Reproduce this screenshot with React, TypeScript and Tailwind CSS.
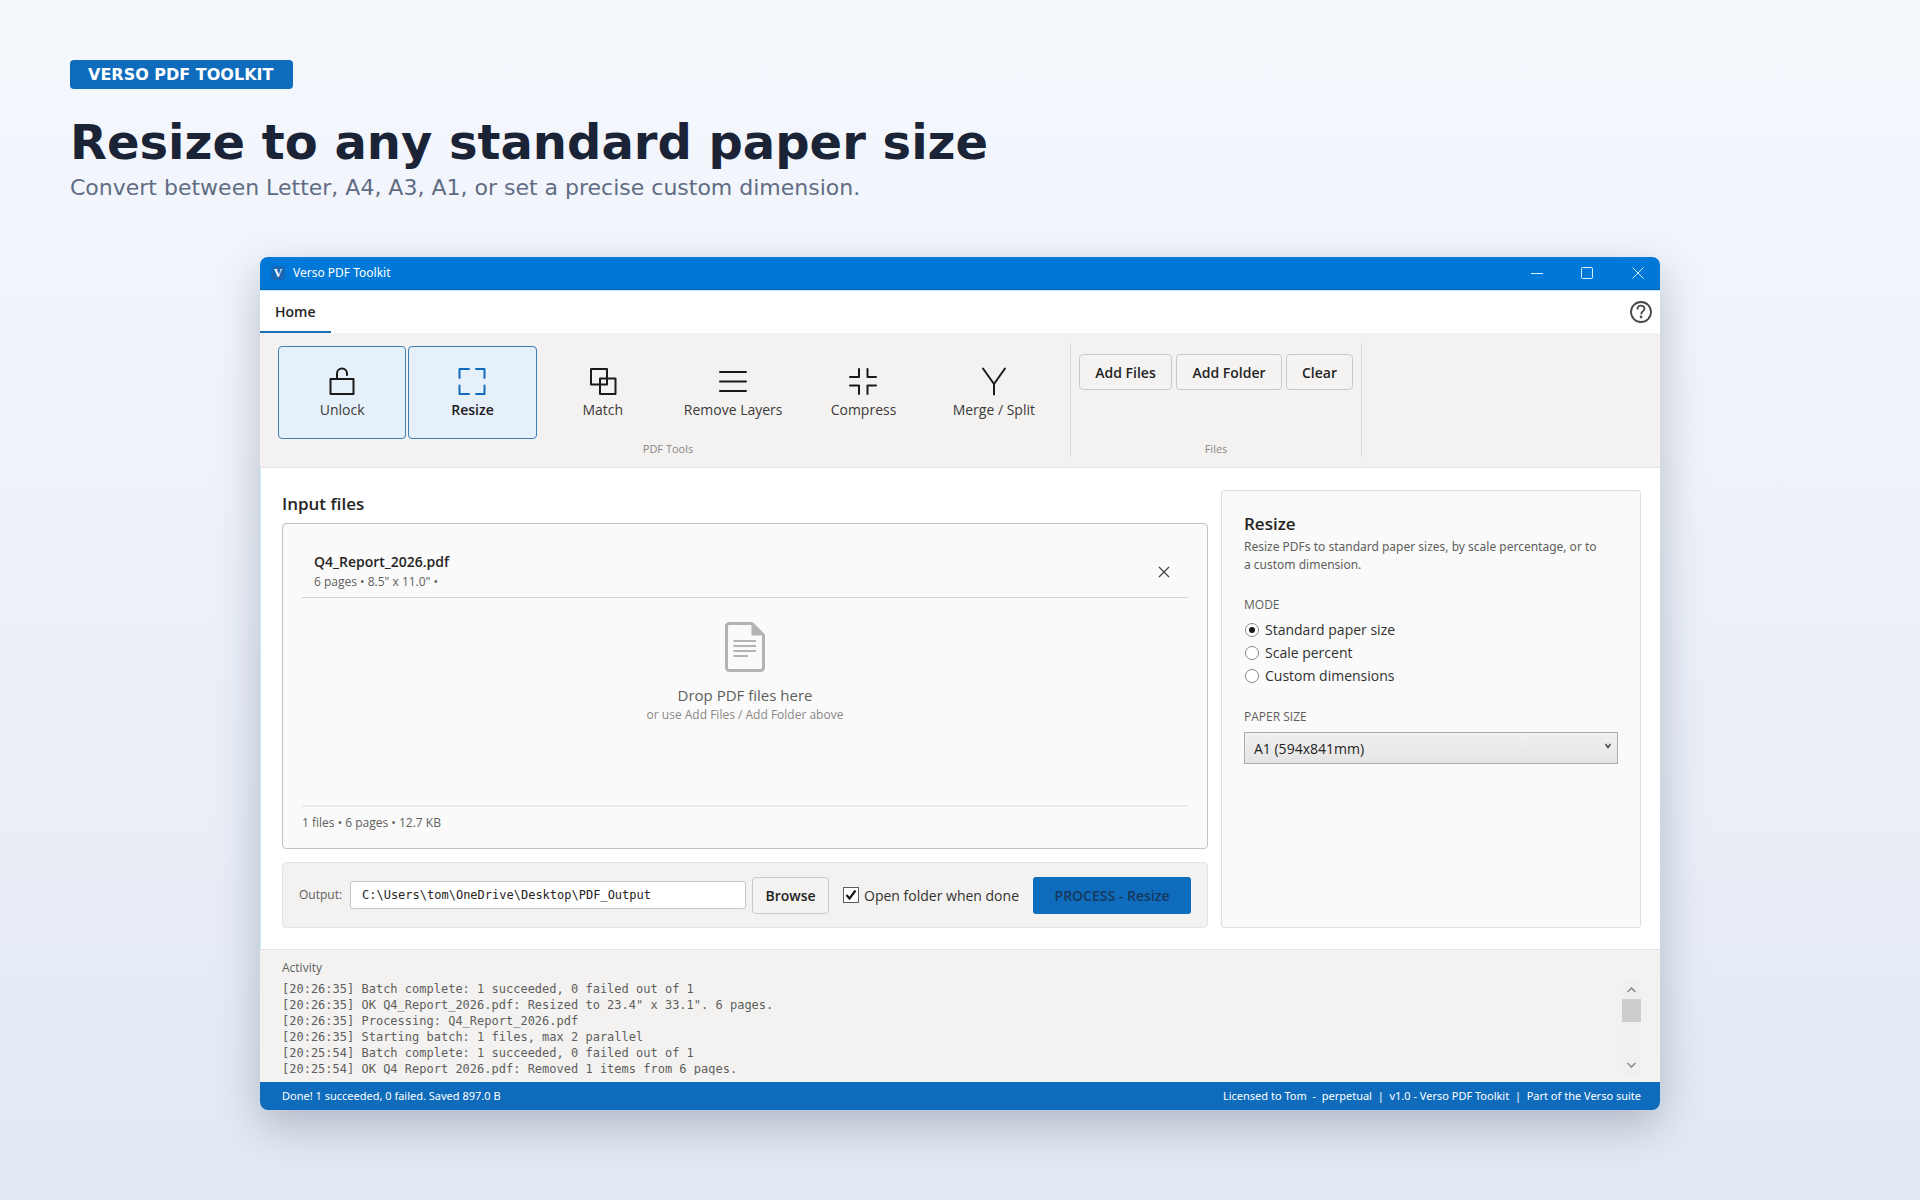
import React, { useState } from "react";

type Tool = {
  name: string;
  icon: React.ReactNode;
};

const tools: Tool[] = [
  {
    name: "Unlock",
    icon: (
      <>
        <rect x="2.5" y="12" width="23" height="15" />
        <path d="M9 12V6.5a5 5 0 0 1 10 0V8" />
      </>
    ),
  },
  {
    name: "Resize",
    icon: <path d="M1.5 11V2H11M18 2h8.500v9M1.500 18.500V27H11M18 27h8.500v-8.500" />,
  },
  {
    name: "Match",
    icon: (
      <>
        <rect x="2" y="2" width="16" height="15.500" />
        <rect x="11" y="11.500" width="15.500" height="15.500" />
      </>
    ),
  },
  {
    name: "Remove Layers",
    icon: <path d="M1 5h26M1 14.500h26M1 24h26" />,
  },
  {
    name: "Compress",
    icon: <path d="M10 2v8H1M18.500 2v8H27M10 27v-8.500H1M18.500 27v-8.500H27" />,
  },
  {
    name: "Merge / Split",
    icon: <path d="M3 1.500L14 17L25 1.500M14 17v10.500" />,
  },
];

const modes = ["Standard paper size", "Scale percent", "Custom dimensions"];

const paperSizes = [
  "A1 (594x841mm)",
  "A3 (297x420mm)",
  "A4 (210x297mm)",
  "Letter (8.5x11in)",
];

const activity = [
  "[20:26:35] Batch complete: 1 succeeded, 0 failed out of 1",
  '[20:26:35] OK Q4_Report_2026.pdf: Resized to 23.4" x 33.1". 6 pages.',
  "[20:26:35] Processing: Q4_Report_2026.pdf",
  "[20:26:35] Starting batch: 1 files, max 2 parallel",
  "[20:25:54] Batch complete: 1 succeeded, 0 failed out of 1",
  "[20:25:54] OK Q4_Report_2026.pdf: Removed 1 items from 6 pages.",
];

const TitleBar = () => (
  <div className="flex h-[33px] items-center justify-between border-b border-[#0a5fad] bg-[#0078d7] pl-[11px] text-white">
    <div className="flex items-center gap-2">
      <span className="flex size-[14px] items-center justify-center rounded-sm bg-[#1767b5] font-['Liberation_Serif',serif] text-xs font-bold">
        V
      </span>
      <span className="font-['Noto_Sans',sans-serif] text-[12px]">Verso PDF Toolkit</span>
    </div>
    <div className="flex h-full">
      <button aria-label="Minimize" className="flex w-[50px] items-center justify-center">
        <svg width="12" height="12" fill="none" stroke="#d8f2ff">
          <path d="M0 6.500h12" />
        </svg>
      </button>
      <button aria-label="Maximize" className="flex w-[50px] items-center justify-center">
        <svg width="12" height="12" fill="none" stroke="#d8f2ff">
          <rect x="0.500" y="0.500" width="11" height="11" rx="1" />
        </svg>
      </button>
      <button aria-label="Close" className="flex w-12 items-center justify-center pl-1">
        <svg width="12" height="12" fill="none" stroke="#d8f2ff">
          <path d="M0.500 0.500l11 11M11.500 0.500l-11 11" />
        </svg>
      </button>
    </div>
  </div>
);

const TabBar = () => (
  <div className="flex h-[43px] items-stretch justify-between border-t border-[#c4ecfa] bg-white pr-2">
    <button className="border-b-2 border-[#1a6fb9] px-[15px] text-[14px] font-semibold text-[#252423]">
      Home
    </button>
    <button aria-label="Help" className="text-[#484644]">
      <svg width="22" height="22" viewBox="0 0 22 22" fill="none" stroke="currentColor" strokeWidth="1.800">
        <circle cx="11" cy="11" r="10" />
        <path d="M7.500 8.500V7.800a3.500 3.200 0 0 1 7 0c0 2.200-3.300 2.600-3.300 5.400" />
        <circle cx="11.100" cy="16" r="0.500" />
      </svg>
    </button>
  </div>
);

const Ribbon = () => {
  const [active, setActive] = useState("Resize");
  const plain =
    "h-9 rounded-[4px] border border-[#cccac8] bg-[#f4f3f2] text-[14px] font-semibold text-[#252423]";
  return (
    <div className="flex h-[135px] border-b border-[#e3e1df] bg-[#f3f2f1] py-[10px] pl-[18px]">
      <div className="flex flex-col items-center border-r border-[#dddbd9] pr-3">
        <div className="grid w-[780px] grid-cols-6 gap-[2px] pt-[3px]">
          {tools.map((tool) => {
            const lit = tool.name === active || tool.name === "Unlock";
            return (
              <button
                key={tool.name}
                onClick={() => setActive(tool.name)}
                className={
                  lit
                    ? "flex h-[93px] flex-col items-center gap-[2px] rounded-[4px] border border-[#3f7fb8] bg-[#e5f0fb] pt-5 text-[#1b1a19]"
                    : "flex h-[93px] flex-col items-center gap-[2px] rounded-[4px] border border-transparent pt-5 text-[#1b1a19]"
                }
              >
                <svg
                  width="28"
                  height="29"
                  viewBox="0 0 28 29"
                  fill="none"
                  stroke={tool.name === active ? "#0f6cbd" : "currentColor"}
                  strokeWidth="2"
                  strokeLinejoin="round"
                  strokeLinecap="round"
                >
                  {tool.icon}
                </svg>
                <span
                  className={
                    tool.name === active
                      ? "text-[14px] leading-6 font-semibold"
                      : "text-[14px] leading-6 text-[#3b3a39]"
                  }
                >
                  {tool.name}
                </span>
              </button>
            );
          })}
        </div>
        <span className="text-[11px] leading-5 text-[#8a8886]">PDF Tools</span>
      </div>
      <div className="flex flex-col items-center border-r border-[#dddbd9] px-2 pt-[11px]">
        <div className="flex gap-1">
          <button className={plain + " w-[93px]"}>Add Files</button>
          <button className={plain + " w-[106px]"}>Add Folder</button>
          <button className={plain + " w-[67px]"}>Clear</button>
        </div>
        <span className="pt-[49px] text-[11px] leading-5 text-[#8a8886]">Files</span>
      </div>
    </div>
  );
};

const DropPanel = () => (
  <div className="flex h-[326px] flex-col rounded-[4px] border border-[#c4c2c0] bg-[#fafafa] px-[19px] pt-4">
    <div className="flex h-[58px] items-center justify-between border-b border-[#d6d4d2] pt-[6px] pr-[18px] pl-3">
      <div>
        <p className="text-[14px] leading-5 font-semibold text-[#252423]">Q4_Report_2026.pdf</p>
        <p className="text-[12px] leading-5 text-[#605e5c]">6 pages • 8.5" x 11.0" •</p>
      </div>
      <button aria-label="Remove file" className="text-[#484644]">
        <svg width="12" height="12" fill="none" stroke="currentColor" strokeWidth="1.300">
          <path d="M1 1l10 10M11 1l-10 10" />
        </svg>
      </button>
    </div>
    <div className="flex grow flex-col items-center pt-6">
      <svg width="40" height="50" viewBox="0 0 40 50" fill="none" stroke="#b3b3b3" strokeLinejoin="round">
        <path d="M4 1.500H27L38.500 13V45a3 3 0 0 1-3 3.500H4.500a3 3 0 0 1-3-3V4.500a3 3 0 0 1 2.500-3z" strokeWidth="3" />
        <path d="M27 1.500V13H38.500z" fill="#b3b3b3" />
        <path d="M8.500 19H31M8.500 24H31M8.500 29H31M8.500 34H23" strokeWidth="2" />
      </svg>
      <p className="pt-[11px] text-[15px] leading-6 text-[#605e5c]">Drop PDF files here</p>
      <p className="text-[12px] leading-4 text-[#8a8886]">or use Add Files / Add Folder above</p>
    </div>
    <div className="h-[43px] border-t-2 border-[#ebebea] pt-[6px] text-[12px] leading-5 text-[#605e5c]">
      1 files • 6 pages • 12.7 KB
    </div>
  </div>
);

const OutputBar = () => (
  <div className="flex h-[66px] items-center rounded-[4px] border border-[#e5e3e1] bg-[#f3f2f1] px-4">
    <label htmlFor="output" className="w-[51px] text-[12px] font-medium text-[#605e5c]">
      Output:
    </label>
    <input
      id="output"
      defaultValue="C:\Users\tom\OneDrive\Desktop\PDF_Output"
      className="h-7 min-w-0 grow rounded-[3px] border border-[#c8c6c4] bg-white px-[11px] font-['DejaVu_Sans_Mono',monospace] text-[12px] text-[#252423]"
    />
    <button className="ml-[6px] h-[37px] w-[77px] rounded-[4px] border border-[#cccac8] bg-[#f4f3f2] text-[14px] font-semibold text-[#252423]">
      Browse
    </button>
    <label className="ml-[14px] flex items-center gap-[5px] text-[14px] text-[#323130]">
      <span className="grid">
        <input
          type="checkbox"
          defaultChecked
          className="peer col-start-1 row-start-1 size-4 appearance-none border border-[#605e5c] bg-white"
        />
        <svg
          className="pointer-events-none invisible col-start-1 row-start-1 peer-checked:visible"
          width="16"
          height="16"
          fill="none"
          stroke="#1b1a19"
          strokeWidth="2.200"
        >
          <path d="M3.500 8l3 3.500L12.500 3.500" />
        </svg>
      </span>
      Open folder when done
    </label>
    <button className="ml-[14px] h-[37px] w-[158px] rounded-[3px] bg-[#0f6cbd] text-[14px] font-semibold text-[#17375c]">
      PROCESS - Resize
    </button>
  </div>
);

const ResizePanel = () => (
  <aside className="rounded-[3px] border border-[#e1dfdd] bg-[#fafafa] px-[22px] pt-[19px]">
    <h2 className="text-[17px] leading-7 font-semibold text-[#252423]">Resize</h2>
    <p className="pr-3 font-['Noto_Sans',sans-serif] text-[12px] leading-[18px] text-[#605e5c]">
      Resize PDFs to standard paper sizes, by scale percentage, or to a custom dimension.
    </p>
    <fieldset className="pt-[21px]">
      <legend className="float-left text-[12px] leading-5 font-medium text-[#605e5c]">MODE</legend>
      <div className="clear-both flex flex-col pt-[3px]">
        {modes.map((mode, i) => (
          <label key={mode} className="flex h-[23px] items-center gap-[6px] pl-px text-[14px] text-[#323130]">
            <input
              type="radio"
              name="mode"
              defaultChecked={i === 0}
              className="grid size-[14px] appearance-none place-content-center rounded-full border border-[#8a8886] bg-white before:size-[6px] before:rounded-full checked:before:bg-[#1b1a19]"
            />
            {mode}
          </label>
        ))}
      </div>
    </fieldset>
    <label htmlFor="paper" className="block pt-5 text-[12px] leading-5 font-medium text-[#605e5c]">
      PAPER SIZE
    </label>
    <div className="mt-[5px] grid items-center">
      <select
        id="paper"
        className="col-start-1 row-start-1 h-8 appearance-none border border-[#acacac] bg-linear-to-b from-[#f0f0f0] to-[#e5e5e5] px-[9px] text-[14px] text-[#252423]"
      >
        {paperSizes.map((size) => (
          <option key={size}>{size}</option>
        ))}
      </select>
      <svg
        className="pointer-events-none col-start-1 row-start-1 mr-[7px] mb-1 justify-self-end"
        width="6"
        height="6"
        fill="none"
        stroke="#484644"
        strokeWidth="1.500"
      >
        <path d="M0.500 1L3 4.500L5.500 1" />
      </svg>
    </div>
  </aside>
);

const ActivityLog = () => (
  <div className="h-[133px] border-t border-[#e5e3e1] bg-[#f3f2f1] pt-2 pr-[19px] pl-[22px]">
    <h2 className="text-[12px] leading-5 font-medium text-[#605e5c]">Activity</h2>
    <div className="flex h-[97px] justify-between overflow-hidden pt-[3px]">
      <div className="font-['DejaVu_Sans_Mono',monospace] text-[12px] leading-4 whitespace-pre text-[#605e5c]">
        {activity.map((line, i) => (
          <p key={i}>{line}</p>
        ))}
      </div>
      <div className="flex w-[19px] flex-col items-center bg-[#f0f0f0] text-[#8a8886]">
        <button aria-label="Scroll up" className="flex h-[18px] shrink-0 items-center">
          <svg width="9" height="6" fill="none" stroke="currentColor" strokeWidth="1.500">
            <path d="M0.500 5L4.500 1L8.500 5" />
          </svg>
        </button>
        <div className="h-[23px] w-full shrink-0 bg-[#cdcdcd]" />
        <button aria-label="Scroll down" className="mt-auto flex h-5 shrink-0 items-center">
          <svg width="9" height="6" fill="none" stroke="currentColor" strokeWidth="1.500">
            <path d="M0.500 1L4.500 5L8.500 1" />
          </svg>
        </button>
      </div>
    </div>
  </div>
);

const App: React.FC = () => {
  return (
    <div className="min-h-screen bg-linear-to-b from-[#f5f8fd] to-[#e3e9f4] px-[70px] pt-[60px] pb-20 font-['DejaVu_Sans',sans-serif]">
      <header>
        <span className="inline-block rounded-[4px] bg-[#0f6cbd] pr-5 pl-[18px] text-[16px] leading-[29px] font-bold text-white">
          VERSO PDF TOOLKIT
        </span>
        <h1 className="pt-[23px] text-[48px] leading-[60px] font-bold text-[#1a2436]">
          Resize to any standard paper size
        </h1>
        <p className="text-[22px] leading-8 text-[#606c84]">
          Convert between Letter, A4, A3, A1, or set a precise custom dimension.
        </p>
      </header>

      <main className="mx-auto mt-[53px] max-w-[1400px] overflow-hidden rounded-[8px] bg-white font-['Open_Sans','Noto_Sans',sans-serif] shadow-[0_16px_44px_rgba(20,30,60,0.25)]">
        <TitleBar />
        <TabBar />
        <Ribbon />
        <div className="flex gap-[13px] border-l border-[#c4ecfa] pt-[22px] pr-[19px] pb-[21px] pl-[21px]">
          <section className="min-w-0 grow">
            <h2 className="pb-[5px] text-[17px] leading-7 font-semibold text-[#252423]">Input files</h2>
            <DropPanel />
            <div className="pt-[13px]">
              <OutputBar />
            </div>
          </section>
          <div className="grid w-[420px] shrink-0">
            <ResizePanel />
          </div>
        </div>
        <ActivityLog />
        <footer className="flex h-7 items-center justify-between bg-[#0f6cbd] pr-[19px] pl-[22px] font-['Noto_Sans',sans-serif] text-[11px] whitespace-pre text-white">
          <span>Done! 1 succeeded, 0 failed. Saved 897.0 B</span>
          <span>Licensed to Tom  -  perpetual  |  v1.0 - Verso PDF Toolkit  |  Part of the Verso suite</span>
        </footer>
      </main>
    </div>
  );
};

export default App;
